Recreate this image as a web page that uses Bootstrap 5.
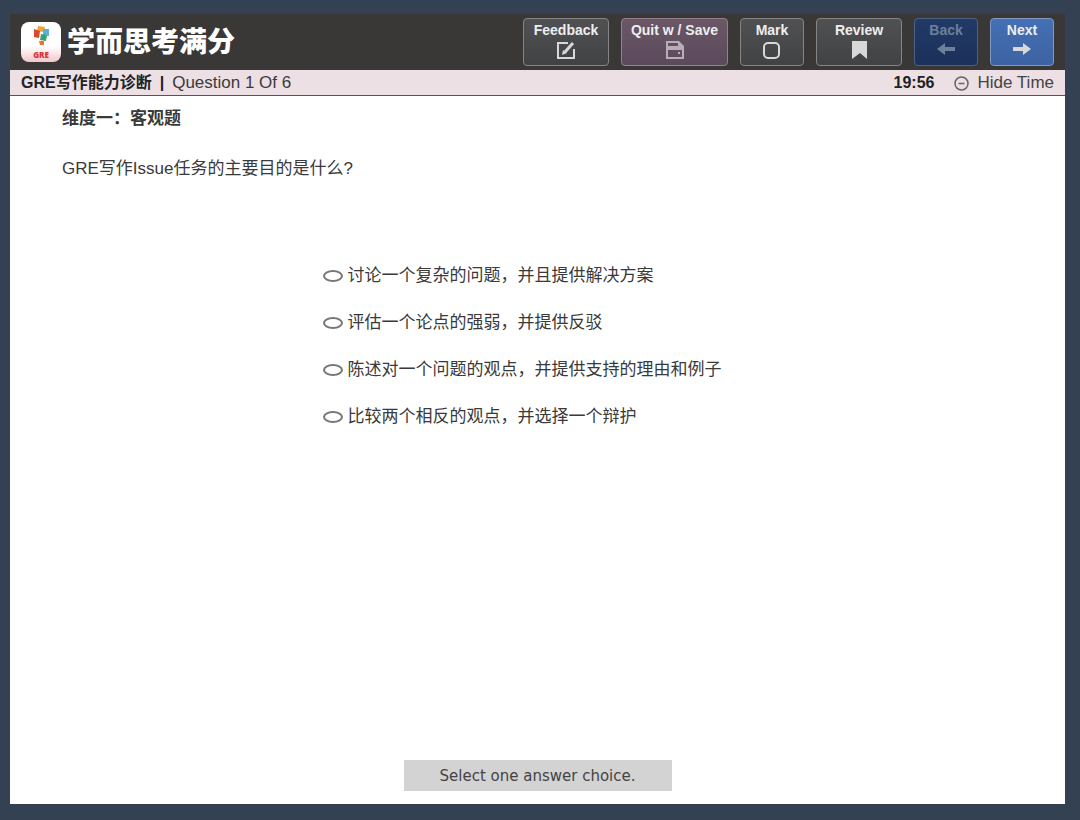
<!DOCTYPE html>
<html lang="zh-CN">
<head>
<meta charset="utf-8">
<meta name="viewport" content="width=device-width, initial-scale=1">
<title>GRE写作能力诊断</title>
<link href="https://cdn.jsdelivr.net/npm/bootstrap@5.3.0/dist/css/bootstrap.min.css" rel="stylesheet">
<style>
  body { background: #344153; color: #3a3a3a; font-family: "Liberation Sans", "Noto Sans CJK SC", sans-serif; font-size: 17px; line-height: 24px; }
  .frame { padding: 14px 15px 16px 10px; }
  .topbar { background: #3a3837; min-height: 56px; padding: 0 11px; }
  .brand-row { gap: 6px; }
  .brand-name { padding-bottom: 4px; font-family: "Noto Sans CJK SC", sans-serif; font-size: 28px; font-weight: 900; line-height: 40px; color: #fff; }
  .tools { gap: 12px; }
  .tool { --bs-btn-padding-x: 0; --bs-btn-padding-y: 0; --bs-btn-border-radius: 4px; --bs-btn-color: #eee; --bs-btn-disabled-color: #6e7f9c; --bs-btn-disabled-opacity: 1; --bs-btn-border-color: #858585; --bs-btn-disabled-border-color: #4b6187;
    height: 48px; padding-top: 2px; font-size: 14px; font-weight: 700; line-height: 19px; background: linear-gradient(#505152, #414243); }
  .tool svg { width: 20px; height: 20px; color: #d8d8d8; }
  .tool-sm { width: 64px; }
  .tool-md { width: 86px; }
  .tool-lg { width: 107px; }
  .tool-quit { background: linear-gradient(#6b5766, #5b4a5c); border-color: #948091; }
  .tool-quit svg { color: #b9adb9; }
  .tool-back, .tool-back:disabled { background: linear-gradient(#213b66, #1b305a); }
  .tool-back svg { color: #6e7f9c; }
  .tool-next { background: linear-gradient(#4470b5, #3d62a2); border-color: #8299c4; }
  .infobar { background: #ece0e4; border-bottom: 1px solid #555; min-height: 26px; padding: 1px 11px 0; }
  .exam-label { font-size: 16px; font-weight: 700; color: #222; }
  .hide-time { color: #444; font-size: 17px; line-height: 24px; }
  .stem { padding: 11px 52px 0; }
  .stem h1 { margin: 0; font-size: 17px; font-weight: 700; line-height: 24px; }
  .stem p { margin: 26px 0 0; }
  .choices { width: 430px; max-width: 100%; margin-top: 83px; gap: 23px; }
  .choice { gap: 5px; }
  .oval { appearance: none; width: 20px; height: 12px; margin: 0; border: 2px solid #777; border-radius: 50%; background: #fff; }
  .oval:checked { background: #444; }
  .hint { width: 268px; max-width: 100%; margin-bottom: 13px; padding: 5px 0 3px; background: #d3d3d3; color: #444; font-family: "DejaVu Sans", sans-serif; font-size: 15px; line-height: 23px; }
</style>
</head>
<body>
<div class="frame min-vh-100 d-flex flex-column">
  <header class="topbar d-flex flex-wrap align-items-center justify-content-between">
    <div class="brand-row d-flex align-items-center">
      <svg width="40" height="40" viewBox="0 0 40 40" role="img" aria-label="GRE">
        <defs><linearGradient id="tile" x2="0" y2="1"><stop offset=".6" stop-color="#fff"/><stop offset="1" stop-color="#f5c6c8"/></linearGradient></defs>
        <rect width="40" height="40" rx="8" fill="url(#tile)"/>
        <path d="M17 4l7 1-1 5-7-1z" fill="#efa23a"/>
        <path d="M13 7l6 2-1 7-5-1z" fill="#d9482f"/>
        <path d="M22 7l6 0v7l-6-1z" fill="#58b1d8"/>
        <path d="M20 12l6 1-1 6-6-1z" fill="#36a368"/>
        <path d="M18 19h5v4h-4z" fill="#e87632"/>
        <text x="20" y="36" text-anchor="middle" font-family="Open Sans, sans-serif" font-size="8" font-weight="800" fill="#d93438">GRE</text>
      </svg>
      <span class="brand-name">学而思考满分</span>
    </div>
    <nav class="tools d-flex flex-wrap" aria-label="Test tools">
      <button type="button" class="btn tool tool-md d-flex flex-column align-items-center">Feedback
        <svg viewBox="0 0 20 20" fill="none" stroke="currentColor" stroke-width="2"><path d="M12 3H2v15h16V9"/><path d="M9 12l8-9" stroke-width="3"/><path d="M6 15l1-5 4 3z" fill="currentColor" stroke="none"/></svg>
      </button>
      <button type="button" class="btn tool tool-lg tool-quit d-flex flex-column align-items-center">Quit w / Save
        <svg viewBox="0 0 20 20" fill="currentColor"><path fill-rule="evenodd" d="M1 1h13l5 5v13H1zM3 3v3h10V3zM3 10v7h14v-7zM13 12h2v2h-2z"/></svg>
      </button>
      <button type="button" class="btn tool tool-sm d-flex flex-column align-items-center">Mark
        <svg viewBox="0 0 20 20" fill="none" stroke="currentColor" stroke-width="2"><rect x="2" y="3" width="15" height="15" rx="4"/></svg>
      </button>
      <button type="button" class="btn tool tool-md d-flex flex-column align-items-center">Review
        <svg viewBox="0 0 20 20" fill="currentColor"><path d="M3 1h15v18l-7-6-8 6z"/></svg>
      </button>
      <button type="button" disabled class="btn tool tool-sm tool-back d-flex flex-column align-items-center">Back
        <svg viewBox="0 0 20 20" fill="currentColor"><path d="M1 9l8-6v4h10v4H9v4z"/></svg>
      </button>
      <button type="button" class="btn tool tool-sm tool-next d-flex flex-column align-items-center">Next
        <svg viewBox="0 0 20 20" fill="currentColor"><path d="M19 9l-8-6v4H1v4h10v4z"/></svg>
      </button>
    </nav>
  </header>

  <div class="infobar d-flex align-items-center justify-content-between">
    <div class="d-flex gap-1"><span class="exam-label">GRE写作能力诊断</span><span class="exam-label ms-1">|</span><span class="ms-1">Question 1 Of 6</span></div>
    <div class="d-flex align-items-center">
      <time class="exam-label me-3">19:56</time>
      <button type="button" class="hide-time btn border-0 p-0 d-flex align-items-center gap-2">
        <svg class="ms-1" width="15" height="15" viewBox="0 0 30 30" fill="none" stroke="#666" stroke-width="3"><circle cx="15" cy="15" r="13"/><path d="M9 15h12"/></svg>Hide Time
      </button>
    </div>
  </div>

  <main class="bg-white flex-grow-1 d-flex flex-column">
    <div class="stem">
      <h1>维度一：客观题</h1>
      <p>GRE写作Issue任务的主要目的是什么?</p>
    </div>
    <form class="choices d-flex flex-column mx-auto" aria-label="Answer choices">
      <div class="choice d-flex align-items-center"><input class="oval" type="radio" name="answer" id="a1"><label for="a1">讨论一个复杂的问题，并且提供解决方案</label></div>
      <div class="choice d-flex align-items-center"><input class="oval" type="radio" name="answer" id="a2"><label for="a2">评估一个论点的强弱，并提供反驳</label></div>
      <div class="choice d-flex align-items-center"><input class="oval" type="radio" name="answer" id="a3"><label for="a3">陈述对一个问题的观点，并提供支持的理由和例子</label></div>
      <div class="choice d-flex align-items-center"><input class="oval" type="radio" name="answer" id="a4"><label for="a4">比较两个相反的观点，并选择一个辩护</label></div>
    </form>
    <div class="hint mt-auto mx-auto text-center">Select one answer choice.</div>
  </main>
</div>
<script src="https://cdn.jsdelivr.net/npm/bootstrap@5.3.0/dist/js/bootstrap.bundle.min.js"></script>
</body>
</html>
